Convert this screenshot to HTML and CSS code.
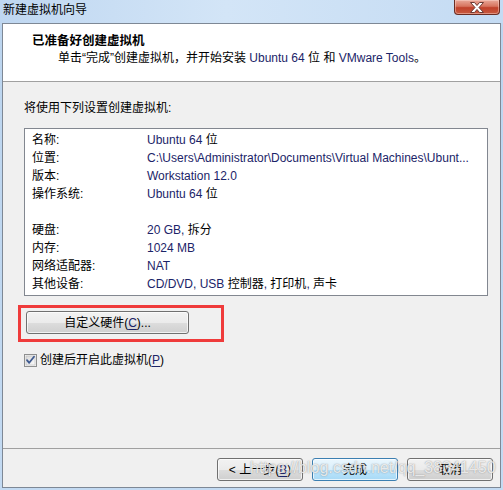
FILE: index.html
```html
<!DOCTYPE html>
<html lang="zh-CN">
<head>
<meta charset="utf-8">
<title>新建虚拟机向导</title>
<link rel="stylesheet" href="styles.css">
</head>
<body>
<div class="window">
  <div class="titlebar">
    <span class="title">新建虚拟机向导</span>
    <div class="close">
      <svg width="16" height="11" viewBox="0 0 16 11"><path d="M1.5 0.5h4l2.5 3 2.5-3h4l-4.5 5 4.5 5h-4l-2.5-3-2.5 3h-4l4.5-5z" fill="#ffffff" stroke="#6b3a33" stroke-width="1" stroke-linejoin="round"/></svg>
    </div>
  </div>
  <div class="client">
    <div class="header">
      <div class="h-title">已准备好创建虚拟机</div>
      <div class="h-sub">单击“完成”创建虚拟机，并开始安装 <span class="lt">Ubuntu 64</span> 位 和 <span class="lt">VMware Tools</span>。</div>
    </div>
    <div class="body">
      <div class="intro">将使用下列设置创建虚拟机:</div>
      <div class="listbox">
        <div class="row"><span class="k">名称:</span><span class="v"><span class="lt">Ubuntu 64</span> 位</span></div>
        <div class="row"><span class="k">位置:</span><span class="v lt">C:\Users\Administrator\Documents\Virtual Machines\Ubunt...</span></div>
        <div class="row"><span class="k">版本:</span><span class="v lt">Workstation 12.0</span></div>
        <div class="row"><span class="k">操作系统:</span><span class="v"><span class="lt">Ubuntu 64</span> 位</span></div>
        <div class="row"></div>
        <div class="row"><span class="k">硬盘:</span><span class="v"><span class="lt">20 GB,</span> 拆分</span></div>
        <div class="row"><span class="k">内存:</span><span class="v lt">1024 MB</span></div>
        <div class="row"><span class="k">网络适配器:</span><span class="v lt">NAT</span></div>
        <div class="row"><span class="k">其他设备:</span><span class="v"><span class="lt">CD/DVD, USB</span> 控制器<span class="lt">,</span> 打印机<span class="lt">,</span> 声卡</span></div>
      </div>
      <div class="annot"><button class="btn wide">自定义硬件(<u class="lt">C</u>)...</button></div>
      <div class="check">
        <span class="cb"><svg width="13" height="13" viewBox="0 0 13 13"><defs><linearGradient id="g" x1="0" y1="0" x2="1" y2="1"><stop offset="0" stop-color="#d8d8d8"/><stop offset="1" stop-color="#fbfbfb"/></linearGradient></defs><rect x="0.5" y="0.5" width="12" height="12" fill="#f4f4f4" stroke="#8e8f8f"/><rect x="2" y="2" width="9" height="9" fill="url(#g)" stroke="#b8b8b8" stroke-width="0.6"/><path d="M3 6.2l2.2 2.6 4.8-6" fill="none" stroke="#3f5a8f" stroke-width="1.8" stroke-linecap="round" stroke-linejoin="round"/></svg></span>
        <span>创建后开启此虚拟机(<u class="lt">P</u>)</span>
      </div>
    </div>
    <div class="footer">
      <button class="btn">&lt; 上一步(<u class="lt">B</u>)</button>
      <button class="btn default">完成</button>
      <button class="btn">取消</button>
    </div>
    <div class="watermark">https://blog.csdn.net/qq_38341450</div>
  </div>
</div>
</body>
</html>
```

FILE: styles.css
```css
* { box-sizing: border-box; }
html, body {
  margin: 0;
  padding: 0;
  width: 503px;
  height: 490px;
  overflow: hidden;
}
body {
  font-family: "Liberation Sans", "Noto Sans CJK SC", sans-serif;
  font-size: 12px;
  color: #000;
}
.window {
  width: 503px;
  height: 490px;
  display: flex;
  flex-direction: column;
  background: linear-gradient(to bottom, #c9def4 0px, #bcd5ef 30px, #c3daf2 100%);
}
.titlebar {
  height: 23px;
  display: flex;
  align-items: flex-start;
  background: linear-gradient(to right, #bfd7f1 0%, #d3e5f7 45%, #c4dbf3 100%);
}
.title {
  padding-left: 3px;
  line-height: 20px;
  font-size: 12px;
}
.close {
  margin-left: auto;
  margin-right: 3px;
  width: 46px;
  height: 15px;
  border: 1px solid #6a2c22;
  border-top: none;
  border-radius: 0 0 4px 4px;
  background: linear-gradient(to bottom, #e9a899 0%, #d7735e 45%, #c0402a 55%, #c85a3f 100%);
  box-shadow: inset 0 0 0 1px rgba(255,220,210,0.45);
  display: flex;
  align-items: center;
  justify-content: center;
}
.client {
  position: relative;
  flex: 1;
  margin: 0 2px 2px 2px;
  border: 1px solid #7e8895;
  background: #f0f0f0;
  display: flex;
  flex-direction: column;
}
.header {
  height: 58px;
  background: #ffffff;
  border-bottom: 1px solid #a0a0a0;
  padding: 9px 0 0 29px;
}
.h-title {
  font-weight: bold;
  font-size: 12.5px;
  line-height: 17px;
}
.h-sub {
  padding-left: 26px;
  line-height: 17px;
}
.lt { color: #1b2468; }
.body {
  flex: 1;
  padding: 18px 12px 0 15px;
  display: flex;
  flex-direction: column;
  align-items: flex-start;
}
.intro {
  margin-left: 6px;
  line-height: 16px;
}
.listbox {
  margin-top: 12px;
  margin-left: 6px;
  width: 464px;
  height: 168px;
  border: 1px solid #828790;
  background: #ffffff;
  padding: 2px 6px 2px 7px;
}
.row {
  height: 18px;
  line-height: 18px;
  display: flex;
  white-space: nowrap;
}
.k {
  width: 115px;
  flex: none;
}
.v {
  flex: 1;
  min-width: 0;
  white-space: nowrap;
}
.annot {
  margin-top: 9px;
  width: 206px;
  height: 37px;
  border: 3px solid #ef3b3b;
  padding: 3px 0 0 5px;
}
.btn {
  font-family: "Liberation Sans", "Noto Sans CJK SC", sans-serif;
  font-size: 12px;
  color: #000;
  height: 23px;
  width: 86px;
  padding: 0;
  border: 1px solid #707070;
  border-radius: 3px;
  background: linear-gradient(to bottom, #f2f2f2 0%, #ebebeb 50%, #dddddd 51%, #cfcfcf 100%);
  box-shadow: inset 0 0 0 1px rgba(255,255,255,0.7);
  line-height: 20px;
}
.btn u { text-underline-offset: 2px; }
.btn.wide { width: 163px; }
.btn.default {
  border-color: #3c7fb1;
  background: linear-gradient(to bottom, #eaf6fd 0%, #d9f0fc 50%, #bee6fd 51%, #a7d9f5 100%);
}
.check {
  margin-top: 10px;
  margin-left: 6px;
  height: 16px;
  display: flex;
  align-items: center;
  gap: 3px;
  line-height: 16px;
}
.cb {
  width: 13px;
  height: 13px;
  display: block;
}
.cb svg { display: block; }
.check u { text-underline-offset: 2px; }
.footer {
  border-top: 1px solid #a0a0a0;
  padding: 9px 7px 6px 0;
  display: flex;
  justify-content: flex-end;
  gap: 9px;
}
.watermark {
  position: absolute;
  left: 247px;
  top: 435px;
  font-family: "Liberation Sans", sans-serif;
  font-size: 16px;
  line-height: 18px;
  color: rgba(255,255,255,0.8);
  text-shadow: 0 0 1px rgba(80,80,80,0.5), 0 0 2px rgba(120,120,120,0.3);
  white-space: nowrap;
  pointer-events: none;
}
```
